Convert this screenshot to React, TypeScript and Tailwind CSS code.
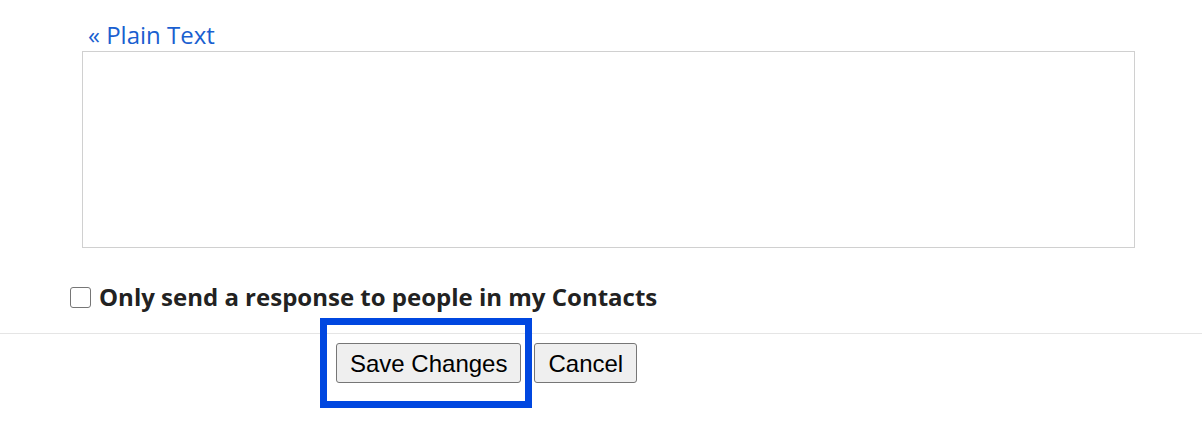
export default function App() {
  return (
    <div className="w-[1202px] h-[435px] bg-white overflow-hidden">
      <div className="pl-[82px] pr-[67px] pt-[19px]">
        <a className="block pl-[6px] text-[24px] leading-[32px] text-[#1a5fd0] cursor-pointer" style={{ fontFamily: '"Open Sans", sans-serif' }}>
          « Plain Text
        </a>
        <textarea className="block w-full h-[197px] border border-[#d0d0d0] resize-none outline-none" />
      </div>

      <label className="flex items-center gap-[8px] pl-[70px] mt-[35px]">
        <span className="w-[21px] h-[21px] border border-[#767676] rounded-[3px] bg-white" />
        <span className="text-[24px] leading-[28px] font-bold text-[#222]" style={{ fontFamily: '"Open Sans", sans-serif' }}>
          Only send a response to people in my Contacts
        </span>
      </label>

      <div className="mt-[22px] border-t border-[#e5e5e5]" />

      <div className="relative flex gap-[13px] pl-[336px] pt-[9px]" style={{ fontFamily: '"Liberation Sans", Arial, sans-serif' }}>
        <button className="h-[40px] px-[13px] pt-[2px] text-[24px] text-black bg-[#efefef] border border-[#767676] rounded-[3px]">
          Save Changes
        </button>
        <button className="h-[40px] px-[13px] pt-[2px] text-[24px] text-black bg-[#efefef] border border-[#767676] rounded-[3px]">
          Cancel
        </button>
        <div className="absolute left-[320px] top-[-16px] w-[212px] h-[90px] border-[7px] border-[#0047e0] pointer-events-none" />
      </div>
    </div>
  );
}
